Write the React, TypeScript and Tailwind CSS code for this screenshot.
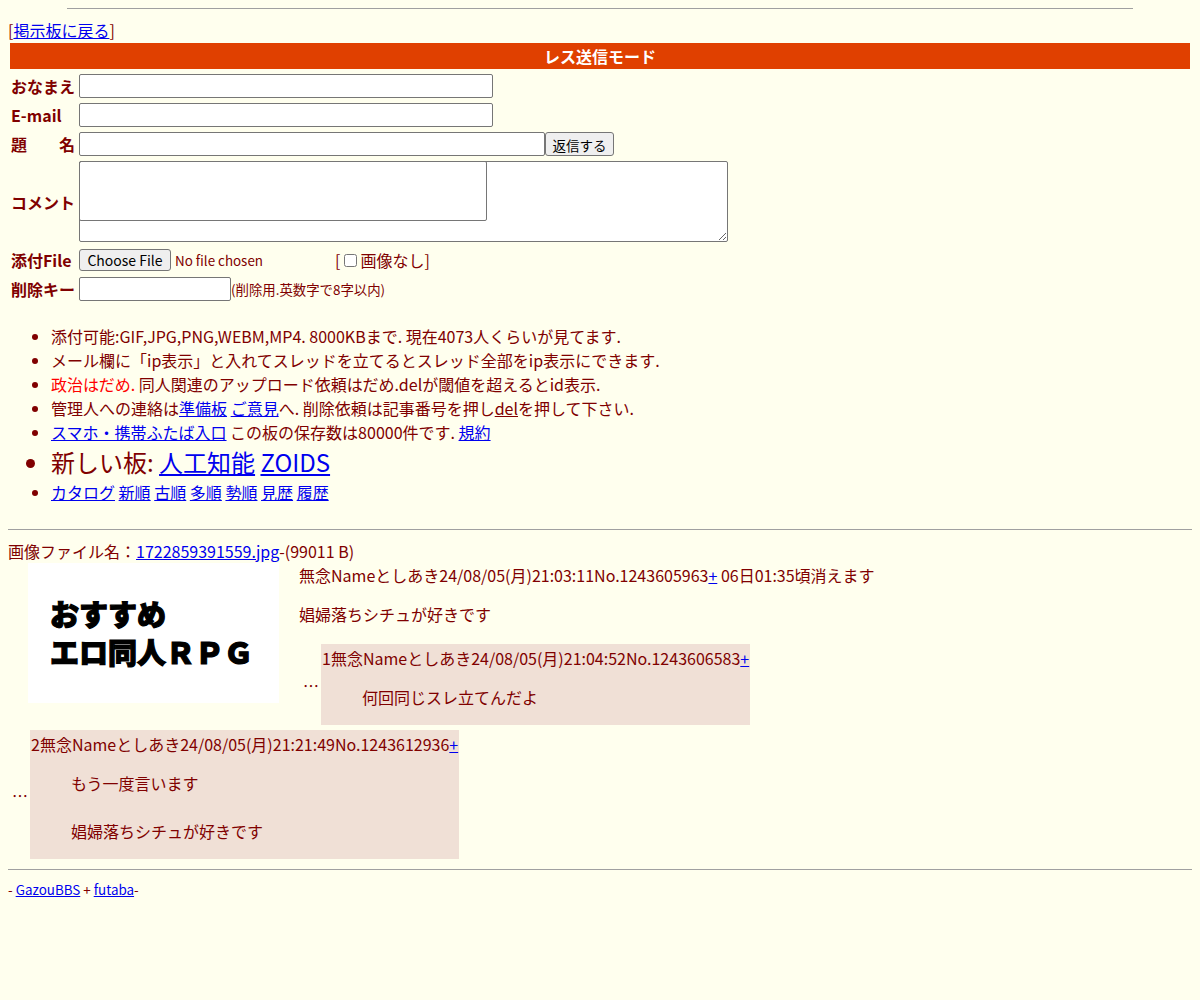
const link = "text-[#0000ee] underline";
const field = "bg-white border border-[#767676] rounded-[2px]";

const Label = ({ children }: { children: React.ReactNode }) => (
  <div className="w-[69px] pl-[1px] font-bold whitespace-pre">{children}</div>
);

const Reply = ({ head, lines }: { head: string; lines: string[] }) => (
  <div className="flex">
    <div className="w-[22px] pl-[4px] flex items-center">…</div>
    <div className="bg-[#f0e0d6] px-[1px] pt-[2px] pb-[16px]">
      <div className="whitespace-nowrap">
        {head}
        <a className={link} href="#">+</a>
      </div>
      <div className="ml-[40px] mt-[15px]">
        {lines.map((l, i) => (
          <div key={i} className="h-[24px]">{l}</div>
        ))}
      </div>
    </div>
  </div>
);

export default function App() {
  return (
    <div className="min-h-[1000px] bg-[#ffffee] text-[#800000] font-['Noto_Sans_CJK_JP','Noto_Sans',sans-serif] text-[16px] leading-[24px] px-2 pt-2">
      <div className="mx-auto w-[90%] border-t border-[#a0a0a0]" />
      <div className="mt-[9px]">
        [<a className={link} href="#">掲示板に戻る</a>]
      </div>

      {/* form */}
      <div className="mx-[2px] mt-[1px] h-[26px] bg-[#e04000] text-white font-bold flex items-center justify-center">
        レス送信モード
      </div>
      <div className="pl-[2px] mt-[3px] flex flex-col gap-[1px]">
        <div className="flex items-center h-[28px]">
          <Label>おなまえ</Label>
          <input className={`${field} w-[414px] h-[24px]`} />
        </div>
        <div className="flex items-center h-[28px]">
          <Label>E-mail</Label>
          <input className={`${field} w-[414px] h-[24px]`} />
        </div>
        <div className="flex items-center h-[28px]">
          <Label>{"題　　名"}</Label>
          <input className={`${field} w-[466px] h-[24px]`} />
          <button className="h-[24px] w-[69px] bg-[#efefef] border border-[#767676] rounded-[3px] text-[13.5px] text-black">
            返信する
          </button>
        </div>
        <div className="flex items-center h-[85px]">
          <Label>コメント</Label>
          <div className="relative w-[649px] h-[81px]">
            <textarea className={`${field} w-full h-full block`} />
            <div className="absolute left-0 top-0 w-[408px] h-[60px] border border-[#767676] rounded-[2px] pointer-events-none" />
          </div>
        </div>
        <div className="flex items-center h-[30px]">
          <Label>添付File</Label>
          <div className="w-[256px] flex items-center">
            <button className="h-[22px] w-[92px] bg-[#efefef] border border-[#767676] rounded-[3px] text-[14px] leading-[20px] text-black">
              Choose File
            </button>
            <span className="ml-[4px] text-[13.4px]">No file chosen</span>
          </div>
          <span className="flex items-center">
            [<input type="checkbox" className="ml-[4px] mr-[3px] w-[13px] h-[13px]" />画像なし]
          </span>
        </div>
        <div className="flex items-center h-[26px]">
          <Label>削除キー</Label>
          <input className={`${field} w-[152px] h-[24px]`} />
          <span className="text-[13.4px]">(削除用.英数字で8字以内)</span>
        </div>
      </div>

      {/* notes */}
      <ul className="list-disc pl-[43px] mt-[22px]">
        <li>添付可能:GIF,JPG,PNG,WEBM,MP4. 8000KBまで. 現在4073人くらいが見てます.</li>
        <li>メール欄に「ip表示」と入れてスレッドを立てるとスレッド全部をip表示にできます.</li>
        <li>
          <span className="text-[#ff0000]">政治はだめ.</span> 同人関連のアップロード依頼はだめ.delが閾値を超えるとid表示.
        </li>
        <li>
          管理人への連絡は<a className={link} href="#">準備板</a> <a className={link} href="#">ご意見</a>へ. 削除依頼は記事番号を押し
          <a className="underline" href="#">del</a>を押して下さい.
        </li>
        <li>
          <a className={link} href="#">スマホ・携帯ふたば入口</a> この板の保存数は80000件です. <a className={link} href="#">規約</a>
        </li>
        <li className="text-[24px] leading-[36px]">
          新しい板: <a className={link} href="#">人工知能</a> <a className={link} href="#">ZOIDS</a>
        </li>
        <li>
          <a className={link} href="#">カタログ</a> <a className={link} href="#">新順</a>{" "}
          <a className={link} href="#">古順</a> <a className={link} href="#">多順</a>{" "}
          <a className={link} href="#">勢順</a> <a className={link} href="#">見歴</a>{" "}
          <a className={link} href="#">履歴</a>
        </li>
      </ul>

      <div className="mt-[25px] border-t border-[#a0a0a0]" />

      {/* thread */}
      <div className="mt-[9px]">
        画像ファイル名：<a className={link} href="#">1722859391559.jpg</a>-(99011 B)
      </div>
      <div className="flex items-start">
        <div className="ml-[20px] w-[251px] h-[140px] shrink-0 bg-white pl-[22px] pt-[31px] text-black font-black text-[29px] leading-[38px] [-webkit-text-stroke:1.2px_black]">
          <div>おすすめ</div>
          <div>エロ同人ＲＰＧ</div>
        </div>
        <div className="ml-[20px]">
          <div>
            無念Nameとしあき24/08/05(月)21:03:11No.1243605963<a className={link} href="#">+</a> 06日01:35頃消えます
          </div>
          <div className="mt-[15px]">娼婦落ちシチュが好きです</div>
          <div className="mt-[18px]">
            <Reply head="1無念Nameとしあき24/08/05(月)21:04:52No.1243606583" lines={["何回同じスレ立てんだよ"]} />
          </div>
        </div>
      </div>
      <div className="mt-[5px]">
        <Reply
          head="2無念Nameとしあき24/08/05(月)21:21:49No.1243612936"
          lines={["もう一度言います", "", "娼婦落ちシチュが好きです"]}
        />
      </div>

      <div className="mt-[10px] border-t border-[#a0a0a0]" />
      <div className="mt-[9px] text-[13.4px] leading-[20px]">
        - <a className={link} href="#">GazouBBS</a> + <a className={link} href="#">futaba</a>-
      </div>
    </div>
  );
}
